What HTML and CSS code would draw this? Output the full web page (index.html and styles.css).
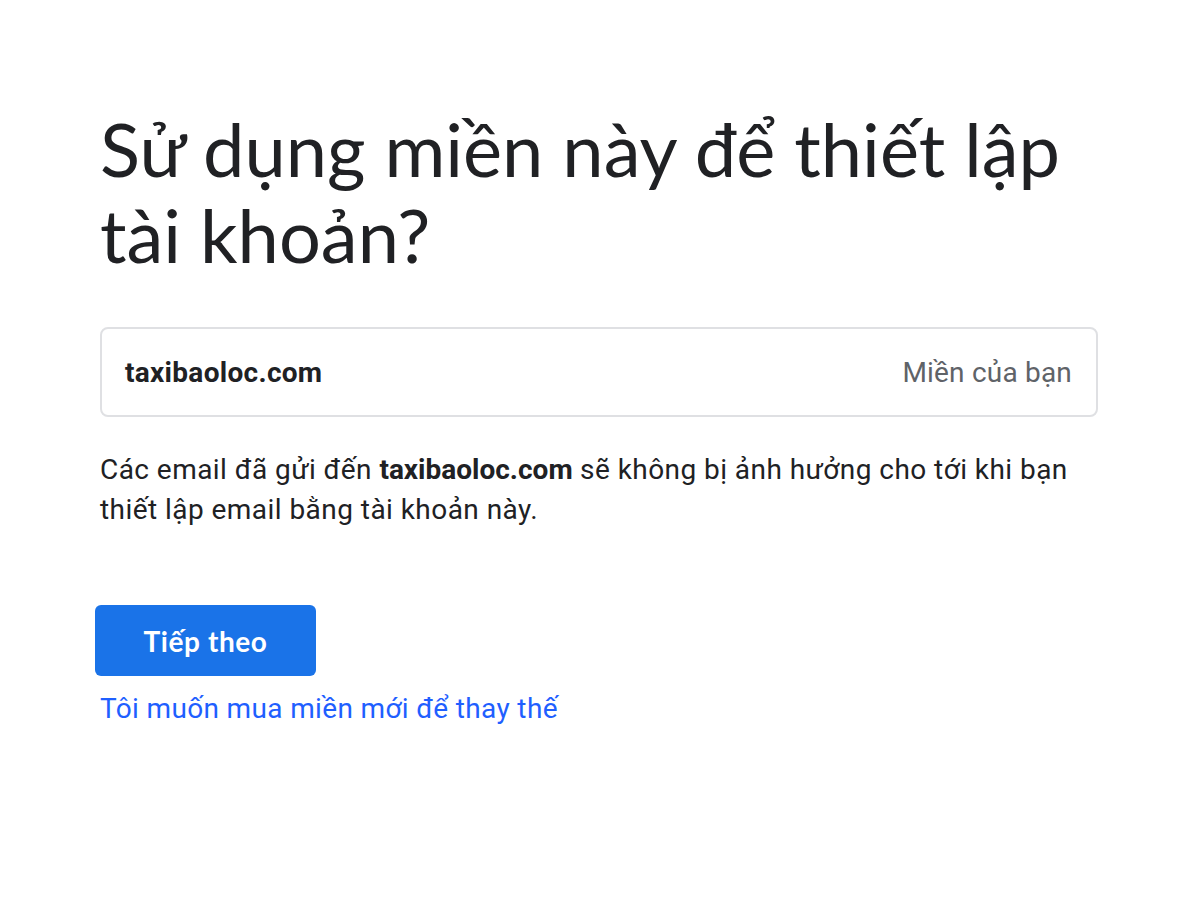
FILE: index.html
```html
<!DOCTYPE html>
<html lang="vi">
<head>
    <meta charset="UTF-8">
    <meta name="viewport" content="width=device-width, initial-scale=1.0">
    <title>Sử dụng miền này để thiết lập tài khoản?</title>
    <link rel="stylesheet" href="styles.css">
</head>
<body>
    <div class="container">
        <h1>Sử dụng miền này để thiết lập tài khoản?</h1>

        <div class="domain-box">
            <span class="domain-name">taxibaoloc.com</span>
            <span class="domain-label">Miền của bạn</span>
        </div>

        <p class="note">Các email đã gửi đến <b>taxibaoloc.com</b> sẽ không bị ảnh hưởng cho tới khi bạn thiết lập email bằng tài khoản này.</p>

        <div class="actions">
            <button class="next-btn">Tiếp theo</button>
            <a href="#" class="buy-link">Tôi muốn mua miền mới để thay thế</a>
        </div>
    </div>
</body>
</html>
```

FILE: styles.css
```css
body {
    margin: 0;
    background-color: #fff;
    color: #202124;
    font-family: Roboto, 'Noto Sans', sans-serif;
}
.container {
    width: 998px;
    padding: 106px 0 0 100px;
}
h1 {
    font-family: Lato, 'Open Sans', sans-serif;
    font-size: 74px;
    font-weight: 400;
    line-height: 86px;
    margin: 0 0 49px;
    color: #202124;
}
.domain-box {
    display: flex;
    align-items: center;
    justify-content: space-between;
    height: 86px;
    padding: 0 24px 0 23px;
    border: 2px solid #dfe0e3;
    border-radius: 8px;
}
.domain-name {
    font-size: 28px;
    font-weight: 700;
    letter-spacing: 0.3px;
    color: #202124;
}
.domain-label {
    font-size: 28px;
    letter-spacing: 0.2px;
    color: #5f6368;
}
.note {
    font-size: 28px;
    line-height: 40px;
    letter-spacing: 0.45px;
    margin: 33px 0 0;
    color: #202124;
}
.note b {
    font-weight: 700;
    letter-spacing: 0;
}
.actions {
    display: flex;
    flex-direction: column;
    align-items: flex-start;
    margin-top: 75px;
}
.next-btn {
    margin-left: -5px;
    width: 221px;
    height: 71px;
    border: none;
    border-radius: 6px;
    background-color: #1a73e8;
    color: #fff;
    font-family: Lato, 'Open Sans', sans-serif;
    font-size: 28px;
    font-weight: 700;
    letter-spacing: 0.6px;
    cursor: pointer;
}
.buy-link {
    margin-top: 16px;
    font-size: 28px;
    letter-spacing: 0.35px;
    color: #1f5fff;
    text-decoration: none;
}
```
